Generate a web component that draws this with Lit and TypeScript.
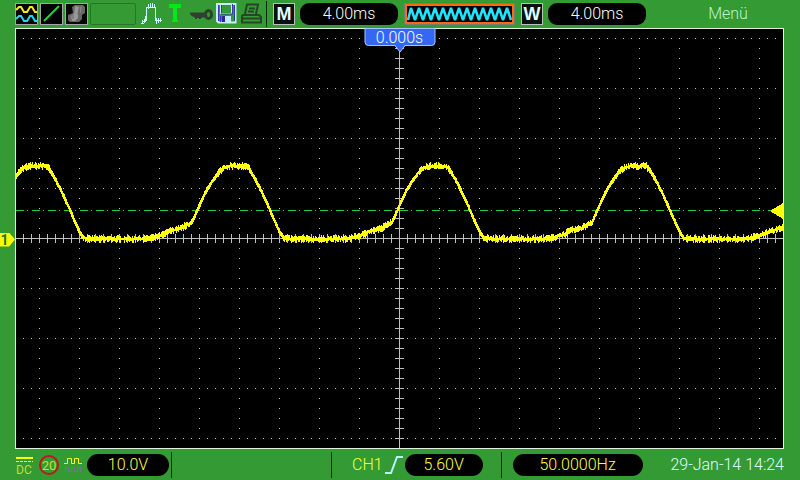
import { LitElement, html, svg, css } from "lit";
import { customElement } from "lit/decorators.js";

/* One period of the signal: [offset from the trigger point, y] */
const SHAPE: [number, number][] = [
  [-115, 238], [-108, 239], [-58, 239], [-48, 238], [-40, 236], [-34, 234], [-29, 231],
  [-17, 228], [-7, 222], [-3, 213], [1, 204], [7, 191], [13, 181], [19, 173],
  [25, 168], [31, 166], [47, 166], [51, 170], [57, 180], [63, 192], [69, 205],
  [75, 219], [81, 232], [85, 238],
];
const PERIOD = 200;
const TRIGGER_X = 399;

function level(x: number): number {
  const o = ((((x - TRIGGER_X + 115) % PERIOD) + PERIOD) % PERIOD) - 115;
  for (let i = 1; i < SHAPE.length; i++) {
    const [x0, y0] = SHAPE[i - 1];
    const [x1, y1] = SHAPE[i];
    if (o <= x1) return y0 + ((y1 - y0) * (o - x0)) / (x1 - x0);
  }
  return 238;
}

/* The trace is a column of lit pixels per sample, with a little noise */
function tracePath(): string {
  let seed = 7;
  const rnd = () => (seed = (seed * 16807) % 2147483647) / 2147483647;
  let d = "";
  for (let x = 16; x < 783; x++) {
    const a = level(x);
    const b = level(x + 1);
    const steep = Math.abs(b - a) > 1;
    const up = steep ? 1 + rnd() : 1 + rnd() * 3;
    const down = steep ? 2 + rnd() : 1 + rnd() * 3;
    d += `M${x + 0.5} ${Math.round(Math.min(a, b) - up)}V${Math.round(Math.max(a, b) + down)}`;
  }
  return d;
}

const rows = [38, 88, 138, 188, 288, 338, 388, 438];
const columns = Array.from({ length: 19 }, (_, i) => 39 + i * 40).filter((x) => x !== 399);

function zigzag(): string {
  let d = "M4 17";
  for (let i = 0; i < 13; i++) d += `L${7 + i * 8} 5L${11 + i * 8} 17`;
  return d;
}

@customElement("scope-plot")
export class ScopePlot extends LitElement {
  static styles = css`
    :host {
      position: relative;
      display: block;
      box-sizing: border-box;
      border: 1px solid #dcf5dc;
      background: #000;
      min-height: 0;
    }
    .grid { position: absolute; inset: 0; display: block; width: 100%; height: 100%; }
    .dots { stroke: #c4c4c4; stroke-width: 1; fill: none; }
    .rows { stroke-dasharray: 1 7; }
    .cols { stroke-dasharray: 1 9; }
    .axis { stroke: #c0c0c0; stroke-width: 1; }
    .tick { stroke: #c0c0c0; stroke-width: 9; }
    .level { stroke: #22cc33; stroke-width: 1; stroke-dasharray: 8 3 1 4; }
    .trace { stroke: #ffff10; stroke-width: 1; fill: none; }
    .mark { fill: #ffff00; }
    .tag {
      position: absolute;
      top: -1px;
      left: 50%;
      transform: translateX(-50%);
      display: flex;
      flex-direction: column;
      align-items: center;
    }
    .time {
      box-sizing: border-box;
      width: 71px;
      height: 18px;
      border: 1px solid #a8c4ff;
      border-radius: 0 0 4px 4px;
      background: #3468f4;
      color: #fff;
      font-size: 16px;
      line-height: 17px;
      text-align: center;
    }
    .tip { display: block; margin-top: -1px; }
  `;

  render() {
    return html`
      <svg class="grid" viewBox="16 29 767 419" preserveAspectRatio="none" shape-rendering="crispEdges" aria-hidden="true">
        <g class="dots rows">${rows.map((y) => svg`<path d="M23 ${y + 0.5}H776" />`)}</g>
        <g class="dots cols">${columns.map((x) => svg`<path d="M${x + 0.5} 48V430" />`)}</g>
        <path class="axis" d="M16 238.5H783M399.5 29V448" />
        <path class="tick rows" d="M23 238.5H776" />
        <path class="tick cols" d="M399.5 38V440" />
        <path class="level" d="M16 210.5H772" />
        <path class="trace" d=${tracePath()} />
        <path class="mark" d="M770 211L783 203V219Z" />
      </svg>
      <div class="tag">
        <span class="time">0.000s</span>
        <svg class="tip" width="11" height="8" aria-hidden="true">
          <path d="M0 0L5.500 7L11 0" fill="#3468f4" stroke="#a8c4ff" />
        </svg>
      </div>
    `;
  }
}

@customElement("app-root")
export class AppRoot extends LitElement {
  static styles = css`
    :host {
      display: flex;
      flex-direction: column;
      min-height: 100vh;
      box-sizing: border-box;
      background: #349a34;
      color: #dff;
      font-family: Roboto, "Liberation Sans", sans-serif;
      font-weight: 300;
      font-size: 16px;
      line-height: 22px;
      white-space: nowrap;
    }
    svg { display: block; flex: none; }
    .bar { display: flex; align-items: center; flex: none; }
    .top { height: 28px; padding-left: 15px; }
    .bottom { height: 31px; padding: 0 16px; }
    .group { display: flex; align-items: center; gap: 2px; }
    .status { margin-left: 5px; }
    .slot {
      box-sizing: border-box;
      width: 46px;
      height: 22px;
      border: 1px solid #2a742a;
      border-radius: 2px;
    }
    .split { width: 1px; height: 26px; background: #062806; flex: none; }
    .top .split { margin: 0 6px 0 3px; }
    .letter {
      box-sizing: border-box;
      width: 22px;
      height: 22px;
      border: 1px solid #b4c4b4;
      background: #081010;
      color: #dff;
      font-family: "Liberation Sans", Arial, sans-serif;
      font-weight: bold;
      font-size: 18px;
      line-height: 20px;
      text-align: center;
    }
    .pill {
      height: 22px;
      border-radius: 11px;
      background: #000;
      text-align: center;
      color: #fff;
    }
    .top .pill { width: 98px; margin: 0 6px 0 5px; border-radius: 9px; }
    .memory { margin-right: 6px; }
    .menu {
      flex: 1;
      padding: 0 0 0 4px;
      border: 0;
      background: none;
      color: #b8f4c8;
      font: inherit;
      text-align: center;
    }
    .middle { flex: 1; display: grid; grid-template-columns: 15px 1fr 16px; }
    .gutter { display: flex; align-items: center; padding-top: 2px; }
    .channel {
      box-sizing: border-box;
      width: 15px;
      height: 14px;
      padding-right: 6px;
      background: #ffff00;
      clip-path: polygon(0 0, 9px 0, 15px 7px, 9px 14px, 0 14px);
      color: #287028;
      font-weight: bold;
      font-size: 14px;
      line-height: 14px;
      text-align: center;
    }
    .yellow, .bottom .pill { color: #ffff40; }
    .left { gap: 5px; }
    .volts { width: 82px; }
    .left .split { margin-left: -3px; }
    .trigger { margin-left: 159px; gap: 2px; }
    .trigger .yellow { margin-left: 18px; }
    .threshold { width: 78px; }
    .trigger .split:last-child { margin-left: 16px; }
    .freq { width: 130px; margin-left: 11px; }
    .date { margin-left: auto; }
  `;

  render() {
    return html`
      <header class="bar top">
        <div class="group">
          <svg width="23" height="22" viewBox="0 0 23 22" role="img" aria-label="Channels">
            <rect x=".5" y=".5" width="22" height="21" fill="#000" stroke="#a0a8a0" />
            <path d="M1 7L4 4H6L9 9H12L15 4H17L20 9H22" fill="none" stroke="#ffe81c" stroke-width="2" />
            <path d="M1 16L4 13H6L9 18H12L15 13H17L20 18H22" fill="none" stroke="#20d8f8" stroke-width="2" />
          </svg>
          <svg width="23" height="22" viewBox="0 0 23 22" role="img" aria-label="Vectors">
            <rect x=".5" y=".5" width="22" height="21" fill="#000" stroke="#a0a8a0" />
            <path d="M4 18L19 3" fill="none" stroke="#10e030" stroke-width="2" />
          </svg>
          <svg width="23" height="22" viewBox="0 0 23 22" role="img" aria-label="Persistence">
            <rect x=".5" y=".5" width="22" height="21" fill="#080808" stroke="#a0a8a0" />
            <path d="M7 4L10 2H18L20 4V10L17 12V16L14 19H5L3 17V12L8 10Z" fill="#686868" />
            <path d="M10 3L14 4L12 12H9ZM6 13L13 11V15L10 18H7Z" fill="#989898" />
            <path d="M15 4H17L16 10H15ZM5 14L9 10V16H8Z" fill="#808080" />
          </svg>
          <div class="slot"></div>
        </div>
        <div class="group status">
          <svg width="22" height="22" viewBox="0 0 22 22" shape-rendering="crispEdges" role="img" aria-label="Acquisition">
            <path d="M0 20.500H3M1.500 17V21M3.500 16V20M5.500 5V18M7.500 1V6M9.500 0V5M11.500 0V5M13.500 1V5M5 4.500H15M14.500 4V17M15.500 15V21M17.500 15V20M19.500 15V19M14 17.500H21M1 18.500H5M4.500 13V18" fill="none" stroke="#ccffff" />
          </svg>
          <svg width="21" height="22" viewBox="0 0 21 22" role="img" aria-label="Triggered">
            <path d="M4 1H16V5H12V17H13V19H7V17H8V5H4Z" fill="#00e818" />
          </svg>
          <svg width="26" height="22" viewBox="0 0 26 22" role="img" aria-label="Lock">
            <path d="M2 10H17V14H14L12 16L10 14L8 16L6 13L4 13Z" fill="#304030" stroke="#304030" />
            <ellipse cx="20.500" cy="11.500" rx="3" ry="4" fill="none" stroke="#304030" stroke-width="3" />
          </svg>
          <svg width="22" height="22" viewBox="0 0 22 22" role="img" aria-label="Save">
            <path d="M1 1H19.500V19.500H2.500L1 18Z" fill="#349a34" stroke="#c8ecff" stroke-width="2" />
            <path d="M4.500 1.500H15.500V10.500H4.500Z" fill="#349a34" stroke="#c8ecff" />
            <path d="M2.500 2V18M5.500 2V10M16.500 1V11H5M18.500 2V18M4.500 19V13" fill="none" stroke="#3838b0" />
            <path d="M6 13H15V19H6Z" fill="#c8ecff" />
            <path d="M6 13H9V19H6Z" fill="#2828a0" />
          </svg>
          <svg width="23" height="22" viewBox="0 0 23 22" role="img" aria-label="Print">
            <path d="M5 11L7 1.500H18L16 11M9 5.500H15M8 8.500H14M3 12H19L21 14V19.500H2V13ZM2 15.500H21" fill="none" stroke="#284428" stroke-width="2" />
          </svg>
        </div>
        <div class="split"></div>
        <div class="letter">M</div>
        <div class="pill">4.00ms</div>
        <svg class="memory" width="111" height="22" viewBox="0 0 111 22" role="img" aria-label="Waveform memory">
          <rect x=".5" y=".5" width="110" height="21" fill="#000" stroke="#708070" />
          <rect x="2" y="2" width="107" height="18" fill="#000" stroke="#ff6a10" stroke-width="2" />
          <path d=${zigzag()} fill="none" stroke="#20e4ff" stroke-width="2.500" stroke-linejoin="bevel" />
        </svg>
        <div class="letter">W</div>
        <div class="pill">4.00ms</div>
        <button class="menu" type="button">Menü</button>
      </header>
      <main class="middle">
        <div class="gutter"><div class="channel">1</div></div>
        <scope-plot></scope-plot>
      </main>
      <footer class="bar bottom">
        <div class="group left">
          <svg width="18" height="22" viewBox="0 0 18 22" role="img" aria-label="DC coupling">
            <path d="M0 4H17" stroke="#ffff10" stroke-width="2" />
            <path d="M0 7.500H17" stroke="#ffff10" stroke-dasharray="3 1" />
            <text x="0" y="20" font-size="12" font-weight="400" fill="#c8d838">DC</text>
          </svg>
          <svg width="20" height="22" viewBox="0 0 20 22" role="img" aria-label="20 MHz limit">
            <circle cx="10" cy="11" r="9" fill="none" stroke="#c01818" stroke-width="2" />
            <text x="10" y="16" font-size="13" font-weight="400" text-anchor="middle" fill="#d0d840">20</text>
          </svg>
          <svg width="18" height="22" viewBox="0 0 18 22" role="img" aria-label="Filter">
            <path d="M0 9.500H3.500V4.500H7.500V9.500H10.500V4.500H14.500V9.500H18" fill="none" stroke="#f8f820" />
            <path d="M1.500 13V17M0 13.500H4.500V17.500H7.500V13.500H10.500V17.500H13.500V13.500H16.500V18" fill="none" stroke="#8068b0" />
          </svg>
          <div class="pill volts">10.0V</div>
          <div class="split"></div>
        </div>
        <div class="group trigger">
          <div class="split"></div>
          <span class="yellow">CH1</span>
          <svg width="18" height="22" viewBox="0 0 18 22" role="img" aria-label="Rising edge">
            <path d="M0 19H6L12 3H18" fill="none" stroke="#b8f4ff" stroke-width="2" />
          </svg>
          <div class="pill threshold">5.60V</div>
          <div class="split"></div>
        </div>
        <div class="pill freq">50.0000Hz</div>
        <time class="date" datetime="2014-01-29T14:24">29-Jan-14 14:24</time>
      </footer>
    `;
  }
}
